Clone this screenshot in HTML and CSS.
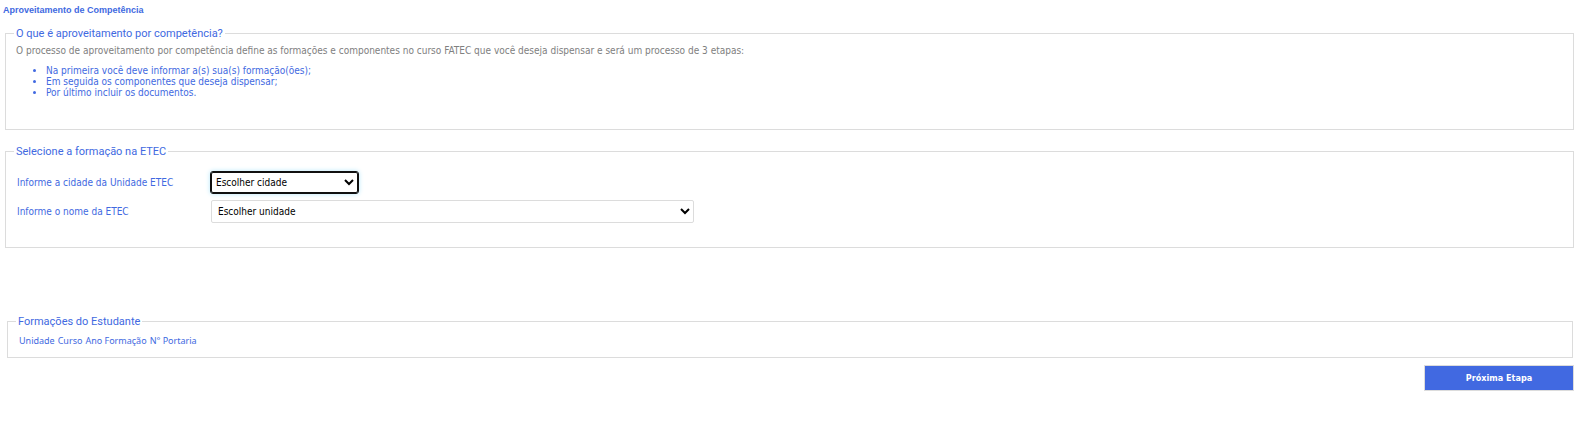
FILE: index.html
```html
<!DOCTYPE html>
<html lang="pt-BR">
<head>
<meta charset="utf-8">
<title>Aproveitamento de Competência</title>
<link rel="stylesheet" href="styles.css">
</head>
<body>
<h1 class="page-title">Aproveitamento de Competência</h1>
<form class="page-form">
  <fieldset class="panel panel-info">
    <legend class="panel-legend">O que é aproveitamento por competência?</legend>
    <p class="intro">O processo de aproveitamento por competência define as formações e componentes no curso FATEC que você deseja dispensar e será um processo de 3 etapas:</p>
    <ul class="steps">
      <li>Na primeira você deve informar a(s) sua(s) formação(ões);</li>
      <li>Em seguida os componentes que deseja dispensar;</li>
      <li>Por último incluir os documentos.</li>
    </ul>
  </fieldset>
  <fieldset class="panel panel-select">
    <legend class="panel-legend">Selecione a formação na ETEC</legend>
    <div class="field">
      <label class="field-label" for="cidade">Informe a cidade da Unidade ETEC</label>
      <select class="choice choice-city" id="cidade"><option>Escolher cidade</option></select>
    </div>
    <div class="field">
      <label class="field-label" for="unidade">Informe o nome da ETEC</label>
      <select class="choice choice-unit" id="unidade"><option>Escolher unidade</option></select>
    </div>
  </fieldset>
  <fieldset class="panel panel-student">
    <legend class="panel-legend">Formações do Estudante</legend>
    <table class="formations">
      <thead><tr><th>Unidade</th><th>Curso</th><th>Ano Formação</th><th>N° Portaria</th></tr></thead>
    </table>
  </fieldset>
  <div class="actions"><button class="next" type="button">Próxima Etapa</button></div>
</form>
</body>
</html>
```
FILE: styles.css
```css
* {
  box-sizing: border-box;
}

body {
  margin: 0;
  padding: 5px 3px;
  background: #fff;
  color: #4169e1;
  font: 10px/11px "DejaVu Sans Condensed", "DejaVu Sans", Verdana, sans-serif;
}

.page-title {
  margin: 0 0 11px;
  font: bold 9px/11px "Liberation Sans", Arial, sans-serif;
}

.page-form {
  padding: 0 0 0 2px;
}

.panel {
  min-width: 0;
  margin: 0;
  padding: 0 8px;
  border: 1px solid #dcdcdc;
}

.panel-legend {
  padding: 0 2px;
  font: 11px/13px Roboto, Arial, sans-serif;
}

.panel-info {
  margin-bottom: 15px;
  padding-bottom: 31px;
}

.intro {
  margin: 5px 2px 9px;
  color: #808080;
}

.steps {
  margin: 0;
  padding-left: 32px;
}

.panel-select {
  margin-bottom: 67px;
  padding-bottom: 24px;
}

.field {
  display: flex;
  align-items: center;
  height: 23px;
  margin: 0 3px 6px;
}

.field:first-of-type {
  margin-top: 13px;
}

.panel-select .field:last-child {
  margin-bottom: 0;
}

.field-label {
  width: 194px;
}

.choice {
  height: 23px;
  padding: 0 2px;
  border: 1px solid #dcdcdc;
  border-radius: 2px;
  background-color: #fff;
  color: #000;
  font: inherit;
}

.choice-city {
  width: 147px;
  height: 21px;
  padding: 0;
  border-color: #101010;
  outline: 1px solid #101010;
  box-shadow: 0 0 5px 1px #b8e8fa;
}

.choice-unit {
  width: 483px;
}

.panel-student {
  margin: 0 1px 0 2px;
  padding-bottom: 9px;
}

.formations {
  margin: 6px 3px 0;
  border-collapse: collapse;
  font: 9px/14px "Noto Sans", "Open Sans", sans-serif;
}

.formations th {
  padding: 0 3px 0 0;
  font-weight: normal;
}

.actions {
  display: flex;
  justify-content: flex-end;
  margin-top: 7px;
}

.next {
  width: 150px;
  height: 26px;
  padding: 0;
  border: 1px solid #dcdcdc;
  background: #4169e1;
  color: #fff;
  font: bold 9px/11px "DejaVu Sans Condensed", "DejaVu Sans", sans-serif;
}
```
